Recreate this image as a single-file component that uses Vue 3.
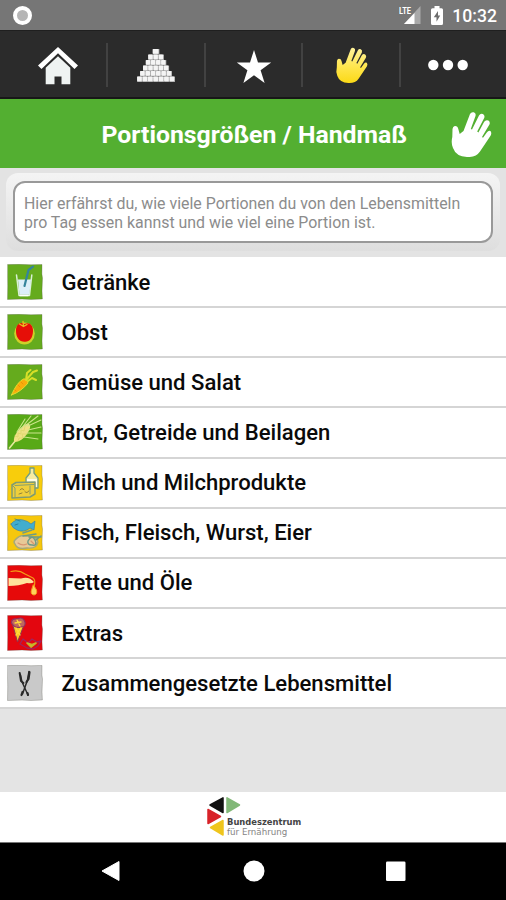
<script setup>
import { ref } from 'vue';

const tabs = ['home', 'pyramid', 'star', 'hand', 'more'];

const categories = [
  { icon: 'drinks', name: 'Getränke', color: '#65ab1d' },
  { icon: 'fruit', name: 'Obst', color: '#65ab1d' },
  { icon: 'vegetables', name: 'Gemüse und Salat', color: '#65ab1d' },
  { icon: 'grain', name: 'Brot, Getreide und Beilagen', color: '#58a916' },
  { icon: 'milk', name: 'Milch und Milchprodukte', color: '#f8cd0c' },
  { icon: 'fish', name: 'Fisch, Fleisch, Wurst, Eier', color: '#f6c70c' },
  { icon: 'oil', name: 'Fette und Öle', color: '#e60a0a' },
  { icon: 'extras', name: 'Extras', color: '#e3060f' },
  { icon: 'cutlery', name: 'Zusammengesetzte Lebensmittel', color: '#c9c9c9' },
];

const time = ref('10:32');

// pyramid rows: number of blocks from top to bottom
const pyramid = [1, 3, 4, 5, 6, 7];
const blocks = pyramid.flatMap((count, row) =>
  Array.from({ length: count }, (_, i) => {
    const width = [6.5, 5.2, 5.1, 5.2, 5.3, 5.4][row];
    return { x: 20 - (count * width) / 2 + i * width, y: 3 + row * 5.5, w: width - 0.4 };
  })
);
</script>

<template>
  <div class="screen">
    <svg width="0" height="0" class="defs">
      <defs>
        <linearGradient id="yellow-hand" x1="0" y1="0" x2="0" y2="46" gradientUnits="userSpaceOnUse">
          <stop offset="0" stop-color="#fff3a0" />
          <stop offset="0.55" stop-color="#ffe64e" />
          <stop offset="1" stop-color="#fbd916" />
        </linearGradient>
        <symbol id="hand" viewBox="0 0 42 46">
          <path d="M4.8 15Q7.7 14.8 8.3 18L9.7 23L13.5 20L20 3Q21.3 .6 23.8 1.3Q26.3 2.2 25.5 5L20.8 18L22 18.5L29 4.5Q30.3 2.2 32.8 3Q35.2 4.2 34.2 7L27.2 20.5L28.4 21.5L34.2 10.7Q35.8 8.4 38.4 9.5Q40.6 11 39.3 13.8L32 26L33 26.8L36.8 21.5Q38.6 19 40.4 20Q42 21.6 40.7 24.5L30 40.5Q26 46.5 17 46Q6 45.5 3 37Q.8 32 2.3 26L2.5 18Q2.8 15.4 4.8 15Z" />
        </symbol>
      </defs>
    </svg>

    <div class="status-bar">
      <span class="record"></span>
      <div class="status-right">
        <svg class="signal" width="23" height="20" viewBox="0 0 23 20">
          <path d="M21.5 1V19H5Z" fill="#a9a9a9" />
          <path d="M15.5 8V19H5Z" fill="#fff" />
          <text x="0" y="8.5" class="lte" textLength="12" lengthAdjust="spacingAndGlyphs">LTE</text>
        </svg>
        <svg class="battery" width="12" height="19" viewBox="0 0 12 19">
          <path d="M3.5 0H8.5V2.2H10.5Q12 2.2 12 3.7V17.5Q12 19 10.5 19H1.5Q0 19 0 17.5V3.7Q0 2.2 1.5 2.2H3.5Z" fill="#fff" />
          <path d="M7 5L2.8 11.2H5.5V15.7L9.2 9.5H7Z" fill="#6d6d6d" />
        </svg>
        <span class="time">{{ time }}</span>
      </div>
    </div>

    <nav class="tab-bar">
      <a v-for="tab in tabs" :key="tab" class="tab">
        <svg v-if="tab === 'home'" class="icon-home" width="42" height="40" viewBox="0 0 42 40">
          <path d="M21 0L41 18.5L37.5 22L21 6.2L4.5 22L1 18.5Z" fill="#fff" />
          <path d="M21 9.2L33.3 20.8V37.3H24.5V29.5H17.5V37.3H8.7V20.8Z" fill="#eff3f2" />
        </svg>
        <svg v-else-if="tab === 'pyramid'" width="40" height="38" viewBox="0 0 40 38">
          <g fill="#aaa">
            <rect v-for="(block, i) in blocks" :key="i" :x="block.x" :y="block.y" :width="block.w + 0.5" height="5.5" />
          </g>
          <g fill="#f4f4f4">
            <rect v-for="(block, i) in blocks" :key="i" :x="block.x" :y="block.y" :width="block.w - 0.3" height="4.8" rx="0.8" />
          </g>
        </svg>
        <svg v-else-if="tab === 'star'" class="icon-star" width="36" height="34" viewBox="0 0 36 34">
          <path d="M18 0L22 12.4H35.2L24.6 20.3L28.6 33L18 25.2L7.4 33L11.4 20.3L.8 12.4H14Z" fill="#fff" />
        </svg>
        <svg v-else-if="tab === 'hand'" class="icon-hand" width="33" height="38" fill="url(#yellow-hand)">
          <use href="#hand" />
        </svg>
        <svg v-else class="icon-more" width="42" height="12" viewBox="0 0 42 12" fill="#fff">
          <circle cx="6.3" cy="6" r="5.2" />
          <circle cx="21" cy="6" r="5.2" />
          <circle cx="35.7" cy="6" r="5.2" />
        </svg>
      </a>
    </nav>

    <header class="title-bar">
      <h1>Portionsgrößen / Handmaß</h1>
      <svg class="title-hand" width="42" height="46" fill="#fff">
        <use href="#hand" />
      </svg>
    </header>

    <section class="intro">
      <div class="intro-frame">
        <p>Hier erfährst du, wie viele Portionen du von den Lebensmitteln<br>pro Tag essen kannst und wie viel eine Portion ist.</p>
      </div>
    </section>

    <ul class="categories">
      <li v-for="category in categories" :key="category.icon">
        <svg class="category-icon" width="36" height="36" viewBox="0 0 36 36" fill="none" stroke-linecap="round" stroke-linejoin="round">
          <path d="M.6 .6L12 .3L24 .7L35 .4L34.9 10L35.5 14L35 27L35.4 35L24 35.5L15 35.1L.5 35.5L.7 22Z" :fill="category.color" stroke="#46463c" stroke-opacity="0.45" stroke-width="0.6" />

          <g v-if="category.icon === 'drinks'">
            <path d="M9.5 11L12 31.5H22.5L24.8 11" stroke="#d8f0d5" stroke-width="1.5" />
            <path d="M11 15.5H24L22.3 30.8H12.5Z" fill="#dceef8" />
            <path d="M17.5 22L21.5 6L26 2.7" stroke="#35849c" stroke-width="2.2" />
            <path d="M13 31.5H21" stroke="#fff" stroke-width="1.3" />
          </g>

          <g v-else-if="category.icon === 'fruit'">
            <ellipse cx="17.5" cy="19.5" rx="10.3" ry="11" fill="#cfd029" />
            <path d="M17.5 10C22 7.5 26.3 11 26 17C25.8 24 22.5 28 18 27.8C12 28 9 23 9 17C9 10 13.3 7.5 17.5 10Z" fill="#e60f08" />
            <path d="M12.5 10L16.5 12.5L20 10.5M16.5 12L16 7.3" stroke="#e7bd20" stroke-width="1.3" />
          </g>

          <g v-else-if="category.icon === 'vegetables'">
            <path d="M4.5 31C8 23 12 17 17 14.8Q20.5 15 21 19C17 24 11 29 4.5 31Z" fill="#f9ad0b" stroke="#e2dc2c" stroke-width="1" />
            <path d="M19 16L20 9L23.5 6M20 15L26 8L30 6.5M21 17L25 14L29 16" stroke="#d8df28" stroke-width="2" />
            <path d="M11 21L13 23M14 18L16 20M8 26L9 27" stroke="#e98b08" stroke-width="0.8" />
          </g>

          <g v-else-if="category.icon === 'grain'">
            <path d="M2.5 34L9 26" stroke="#e7eba0" stroke-width="1.6" />
            <path d="M7 28C6 22 11 15 19 10Q24 9 23 14C20 22 14 28 7 28Z" fill="#efe185" />
            <path d="M8 22L11 23L11 19L14 20L14 16L17 17L18 12M11 27L12 24L16 24L15 20L20 20" stroke="#dcd76a" stroke-width="0.8" />
            <path d="M10 18L18 5M14 15L24 2M18 12L31 2M21 12L34 6M21 16L34 13M20 19L34 19M17 23L31 25" stroke="#cce58b" stroke-width="1.1" />
          </g>

          <g v-else-if="category.icon === 'milk'">
            <path d="M19 17V13L23 8V3H27V8L31 13V23H27" fill="#f6eca4" stroke="#6f9d84" stroke-width="1.3" />
            <path d="M20 14H30V22H20Z" fill="#fffce6" />
            <path d="M5 20L9 17.5L28 17L28 29L23 32L5 33Z" fill="#efcf3b" stroke="#7f9b72" stroke-width="1.5" />
            <path d="M5 20L8 23L8 32M8 20.5L27 19.5M23 21V29" stroke="#839e70" stroke-width="1" />
            <path d="M13 25Q15 22 17 25M18 27Q20 29 22 26M12 29L15 28" stroke="#93833a" stroke-width="1" />
          </g>

          <g v-else-if="category.icon === 'fish'">
            <path d="M4 9Q9 3 16 5Q21 6 24 9L28 6L27 15L23 13Q17 18 10 15Q5 13 4 9Z" fill="#42adce" stroke="#45839b" stroke-width="0.7" />
            <path d="M8 4L13 6M8 10L11 9" stroke="#257c9c" stroke-width="0.8" />
            <path d="M8 25Q13 19 20 21Q30 21 31 27Q30 34 20 33Q10 35 8 29Q6 27 8 25Z" fill="#e8c996" stroke="#a5a979" stroke-width="1.4" />
            <path d="M16 18L25 15M16 21L29 19M22 22L34 22M21 26Q25 19 28 25Q31 31 25 30Q20 30 21 26M29 25L34 21" stroke="#6e9b87" stroke-width="1.5" />
            <path d="M11 28Q15 31 20 29M24 26L27 29" stroke="#d99770" stroke-width="1.2" />
          </g>

          <g v-else-if="category.icon === 'oil'">
            <path d="M1.5 13L14 13.5Q22 11 27 17Q25 19 20 18Q12 21 1.5 21Z" fill="#ffe29b" />
            <path d="M4 6.5Q12 4.5 18 9L26 13Q29 15 27 22" stroke="#f49d17" stroke-width="1.2" />
            <path d="M26.5 20L29.5 25Q30.5 29.5 27 30Q23 29.5 24.5 25Z" fill="#ffd25a" stroke="#f5a01e" />
          </g>

          <g v-else-if="category.icon === 'extras'">
            <path d="M5.5 9L10.5 27L17 10Z" fill="#f9c923" stroke="#913052" stroke-width="1" />
            <path d="M4.5 8Q4.5 3 10 4Q16 1 18 7Q19 12 14 12Q8 14 4.5 8" fill="#bf675e" stroke="#8f3363" stroke-width="1.2" />
            <path d="M8 8L14 7M9 13L13 20M14 13L9 20M10 5L13 11" stroke="#ffd83b" stroke-width="1.3" />
            <path d="M13 29L16 24L21 28L25 24L30 27L34 26L31 31L26 34L20 33Z" stroke="#a2235b" stroke-width="1.3" />
            <path d="M20 28L24 32L29 28L25 29.5Z" fill="#dec729" stroke="#c4b42b" stroke-width="1.7" />
          </g>

          <g v-else stroke="#292929">
            <path d="M13.5 10L15 17L21 30" stroke-width="1.4" />
            <path d="M12.7 8L14 16L16.5 18" stroke-width="2" />
            <path d="M22 6.5L20.5 15L15.5 29" stroke-width="1.5" />
            <path d="M22.5 7L21.5 14L19.5 17M15.5 27L14.5 30M20.5 28L21 30" stroke-width="2.2" />
          </g>
        </svg>
        <span class="category-name">{{ category.name }}</span>
      </li>
    </ul>

    <footer class="sponsor">
      <svg class="sponsor-logo" width="36" height="48" viewBox="0 0 36 48">
        <g stroke-linejoin="round" stroke-width="1.5">
          <path d="M5 12L18 4.8V19.5Z" fill="#111" stroke="#111" />
          <path d="M22 4.8L34.5 12L22 19.5Z" fill="#82b878" stroke="#82b878" />
          <path d="M3 16.5L15.5 23.5L3 30.5Z" fill="#d8232a" stroke="#d8232a" />
          <path d="M5.5 34.5L18 27.5V42Z" fill="#efc51d" stroke="#efc51d" />
        </g>
      </svg>
      <div class="sponsor-text">
        <strong>Bundeszentrum</strong>
        <span>für Ernährung</span>
      </div>
    </footer>

    <div class="system-nav">
      <svg width="22" height="22" viewBox="0 0 22 22"><path d="M2 11L19 1.5V20.5Z" fill="#fff" stroke="#fff" stroke-linejoin="round" /></svg>
      <svg width="22" height="22" viewBox="0 0 22 22"><circle cx="11" cy="11" r="10.5" fill="#fff" /></svg>
      <svg width="22" height="22" viewBox="0 0 22 22"><rect x="1" y="1.5" width="19.5" height="19.5" rx="1.3" fill="#fff" /></svg>
    </div>
  </div>
</template>

<style>
body {
  margin: 0;
  overflow: hidden;
}
</style>

<style scoped>
.screen {
  display: flex;
  flex-direction: column;
  width: 506px;
  height: 900px;
  background: #e4e4e4;
  font-family: Roboto, "Liberation Sans", sans-serif;
  overflow: hidden;
}

.defs {
  position: absolute;
}

.status-bar {
  display: flex;
  flex: none;
  justify-content: space-between;
  align-items: center;
  box-sizing: border-box;
  height: 30px;
  padding: 0 9px 0 13px;
  background: #767676;
}

.record {
  box-sizing: border-box;
  width: 19px;
  height: 19px;
  border: 4px solid #fff;
  border-radius: 50%;
  background: #b5b5b5;
}

.status-right {
  display: flex;
  align-items: center;
}

.signal {
  margin: -1px 9px 0 0;
}

.lte {
  font-size: 9.5px;
  font-weight: 700;
  fill: #fff;
}

.battery {
  margin-right: 9px;
}

.time {
  color: #fff;
  font-size: 17.6px;
  font-weight: 500;
  line-height: 30px;
  margin-top: 2px;
}

.tab-bar {
  display: grid;
  flex: none;
  grid-template-columns: repeat(5, 97.6px);
  justify-content: center;
  box-sizing: border-box;
  height: 69px;
  padding: 12px 0 12px 3px;
  background: #2b2b2b;
  border-top: 1px solid #1f1f1f;
  border-bottom: 2px solid #171717;
}

.tab {
  display: flex;
  align-items: center;
  justify-content: center;
  border-right: 2px solid #424242;
}

.tab:last-child {
  border-right-color: transparent;
}

.icon-home,
.icon-star {
  margin-top: 4px;
}

.icon-more {
  margin-right: 1px;
}

.title-bar {
  display: flex;
  flex: none;
  align-items: center;
  justify-content: flex-end;
  box-sizing: border-box;
  height: 69px;
  padding-right: 14px;
  background: #53af31;
}

.title-bar h1 {
  margin: 2px 43px 0 0;
  color: #fff;
  font-size: 24.8px;
  font-weight: 700;
  line-height: 30px;
  white-space: nowrap;
}

.title-hand {
  margin-top: 1px;
}

.intro {
  flex: none;
  box-sizing: border-box;
  height: 89px;
  padding: 5px 6px 6px;
  background: #e3e3e3;
}

.intro-frame {
  box-sizing: border-box;
  height: 78px;
  padding: 8px 7px;
  border-radius: 12px;
  background: linear-gradient(#f4f4f4, #dedede);
}

.intro p {
  box-sizing: border-box;
  height: 62px;
  margin: 0;
  padding: 11px 0 0 9px;
  border: 2px solid #999;
  border-radius: 12px;
  background: #fff;
  color: #8c8c8c;
  font-size: 15.9px;
  line-height: 19px;
  white-space: nowrap;
}

.categories {
  display: grid;
  flex: none;
  grid-template-rows: 51.15px repeat(8, 50.15px);
  margin: 0;
  padding: 0;
  list-style: none;
}

.categories li {
  display: flex;
  align-items: center;
  box-sizing: border-box;
  padding-left: 7px;
  border-bottom: 2px solid #d5d5d5;
  background: #fff;
}

.categories li:first-child {
  padding-top: 1px;
}

.category-icon {
  flex: none;
}

.category-name {
  margin: 1px 0 0 18.5px;
  color: #0a0a0a;
  font-size: 22.08px;
  font-weight: 500;
  line-height: 26px;
  white-space: nowrap;
}

.sponsor {
  display: flex;
  flex: none;
  box-sizing: border-box;
  height: 50px;
  margin-top: auto;
  padding: 1px 0 0 205px;
  background: #fff;
}

.sponsor-logo {
  flex: none;
}

.sponsor-text {
  display: flex;
  flex-direction: column;
  margin: 24px 0 0 -14px;
  font-family: "DejaVu Sans", sans-serif;
  line-height: 10px;
  white-space: nowrap;
}

.sponsor-text strong {
  color: #444;
  font-size: 8.4px;
}

.sponsor-text span {
  color: #858585;
  font-size: 8.7px;
}

.system-nav {
  display: flex;
  flex: none;
  justify-content: space-between;
  align-items: center;
  box-sizing: border-box;
  height: 58px;
  padding: 0 99px 2px 100px;
  border-top: 1px solid #777;
  background: #000;
}
</style>
